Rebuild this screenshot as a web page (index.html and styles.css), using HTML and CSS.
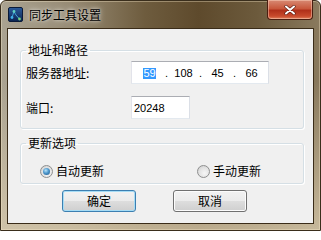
FILE: index.html
```html
<!DOCTYPE html>
<html lang="zh-CN">
<head>
<meta charset="utf-8">
<title>同步工具设置</title>
<link rel="stylesheet" href="styles.css">
</head>
<body>
<div class="window">
  <div class="titlebar">
    <svg class="app-icon" width="15" height="15" viewBox="0 0 15 15">
      <defs>
        <linearGradient id="ig" x1="0" y1="0" x2="0" y2="1">
          <stop offset="0" stop-color="#2a5a9a"/>
          <stop offset="1" stop-color="#0c2450"/>
        </linearGradient>
      </defs>
      <rect x="0.5" y="0.5" width="14" height="14" rx="1.5" fill="url(#ig)" stroke="#0a1a38"/>
      <path d="M4 10.5 L6 4.5 L8 8 L11.5 12" stroke="#3fa0d8" stroke-width="1" fill="none"/>
      <circle cx="6" cy="4.5" r="1.4" fill="#5fd0c0"/>
      <circle cx="4" cy="10.5" r="1.4" fill="#3fb0e8"/>
      <circle cx="11.5" cy="12" r="1.4" fill="#6fd080"/>
    </svg>
    <span class="title">同步工具设置</span>
    <div class="close">
      <svg width="12" height="10" viewBox="0 0 12 10">
        <path d="M2 1.5 L10 8.5 M10 1.5 L2 8.5" stroke="#5a1a10" stroke-width="3.2" stroke-linecap="round"/>
        <path d="M2 1.5 L10 8.5 M10 1.5 L2 8.5" stroke="#ffffff" stroke-width="2" stroke-linecap="round"/>
      </svg>
    </div>
  </div>
  <div class="client">
    <fieldset class="group g-address">
      <legend>地址和路径</legend>
      <div class="row">
        <span class="label">服务器地址:</span>
        <div class="textbox ipbox">
          <span class="field"><span class="sel">59</span></span><span class="dot">.</span>
          <span class="field">108</span><span class="dot">.</span>
          <span class="field">45</span><span class="dot">.</span>
          <span class="field">66</span>
        </div>
      </div>
      <div class="row row-port">
        <span class="label">端口:</span>
        <div class="textbox port">20248</div>
      </div>
    </fieldset>
    <fieldset class="group g-update">
      <legend>更新选项</legend>
      <div class="radios">
        <div class="option first"><span class="radio checked"></span><span class="opt-text">自动更新</span></div>
        <div class="option"><span class="radio"></span><span class="opt-text">手动更新</span></div>
      </div>
    </fieldset>
    <div class="buttons">
      <div class="btn default">确定</div>
      <div class="btn">取消</div>
    </div>
  </div>
</div>
</body>
</html>
```

FILE: styles.css
```css
html, body {
  margin: 0;
  padding: 0;
}
body {
  width: 321px;
  height: 231px;
  overflow: hidden;
  font-family: "Noto Sans CJK SC", "Noto Sans", sans-serif;
  font-size: 12px;
  color: #000;
  background: #fff;
}
.window {
  box-sizing: border-box;
  width: 321px;
  height: 231px;
  display: flex;
  flex-direction: column;
  padding: 0 6px 6px 6px;
  border: 1px solid #3a2e1c;
  border-radius: 6px 6px 0 0;
  background:
    linear-gradient(180deg, rgba(220,206,176,0) 0%, rgba(220,206,176,0) 35%, rgba(220,206,176,0.75) 100%),
    linear-gradient(90deg, #aaa392 0%, #978b74 22%, #6e5c3e 45%, #5e4a2c 62%, #6c5a3c 80%, #8a7a5e 100%);
  box-shadow: inset 0 0 0 1px rgba(255,240,210,0.35);
}
.titlebar {
  height: 27px;
  display: flex;
  align-items: center;
  flex: none;
}
.app-icon {
  margin-left: 1px;
  flex: none;
}
.title {
  margin-left: 6px;
  line-height: 14px;
  text-shadow: 0 0 6px rgba(255,255,255,0.7), 0 0 3px rgba(255,255,255,0.6);
}
.close {
  margin-left: auto;
  margin-right: 1px;
  align-self: flex-start;
  margin-top: -1px;
  width: 46px;
  height: 20px;
  box-sizing: border-box;
  border: 1px solid #4a1e10;
  border-top: none;
  border-radius: 0 0 4px 4px;
  background: linear-gradient(180deg, #d88a74 0%, #c8583c 45%, #b0301a 55%, #c84a2c 85%, #e0805c 100%);
  box-shadow: inset 0 0 0 1px rgba(255,220,200,0.45);
  display: flex;
  align-items: center;
  justify-content: center;
}
.client {
  flex: 1;
  border: 1px solid #3a2c18;
  background: #f0f0f0;
  padding: 14px 9px 0 12px;
  display: flex;
  flex-direction: column;
}
.group {
  margin: 0;
  border: 1px solid #d5dfe5;
  border-radius: 3px;
  box-shadow: inset 1px 1px 0 #fff, 1px 1px 0 #fff;
  padding: 4px 5px 9px 5px;
  min-inline-size: 0;
}
.group legend {
  padding: 0 2px;
  line-height: 14px;
  height: 14px;
}
.row {
  display: flex;
  align-items: center;
  height: 23px;
}
.row-port {
  margin-top: 12px;
}
.label {
  width: 105px;
  flex: none;
  line-height: 14px;
}
.textbox {
  box-sizing: border-box;
  height: 23px;
  background: #fff;
  border: 1px solid #e3e9ef;
  border-top-color: #abadb3;
  border-left-color: #e2e3ea;
  border-right-color: #dbdfe6;
  font-family: "Liberation Sans", sans-serif;
  font-size: 11px;
  display: flex;
  align-items: center;
}
.ipbox {
  width: 138px;
  padding-left: 5px;
}
.field {
  width: 25px;
  text-align: center;
  flex: none;
}
.dot {
  width: 9px;
  text-align: center;
  flex: none;
}
.sel {
  display: inline-block;
  background: #3399ff;
  color: #fff;
  line-height: 11px;
  height: 11px;
}
.port {
  width: 59px;
  padding-left: 2px;
}
.g-update {
  margin-top: 7px;
  padding: 14px 5px 5px 5px;
}
.radios {
  display: flex;
  align-items: center;
  height: 14px;
  margin-left: 14px;
}
.option {
  display: flex;
  align-items: center;
}
.option.first {
  width: 157px;
}
.radio {
  box-sizing: border-box;
  width: 13px;
  height: 13px;
  border-radius: 50%;
  border: 1px solid #8e8f8f;
  background: radial-gradient(circle at 60% 65%, #f6f6f6 0%, #e2e2e2 55%, #c8c8c8 100%);
  display: flex;
  align-items: center;
  justify-content: center;
  flex: none;
}
.radio.checked::after {
  content: "";
  width: 7px;
  height: 7px;
  border-radius: 50%;
  background: radial-gradient(circle at 40% 35%, #b8e4fa 0%, #4d97cc 45%, #1e5486 100%);
}
.opt-text {
  margin-left: 3px;
  line-height: 14px;
}
.buttons {
  display: flex;
  margin-top: 6px;
  padding-left: 42px;
  gap: 37px;
}
.btn {
  box-sizing: border-box;
  width: 74px;
  height: 22px;
  border: 1px solid #707070;
  border-radius: 3px;
  background: linear-gradient(180deg, #f2f2f2 0%, #ebebeb 50%, #dddddd 51%, #cfcfcf 100%);
  box-shadow: inset 0 0 0 1px #fcfcfc;
  display: flex;
  align-items: center;
  justify-content: center;
  line-height: 14px;
}
.btn.default {
  border-color: #3c7fb1;
  box-shadow: inset 0 0 0 1px #a6dcf5;
}
```
